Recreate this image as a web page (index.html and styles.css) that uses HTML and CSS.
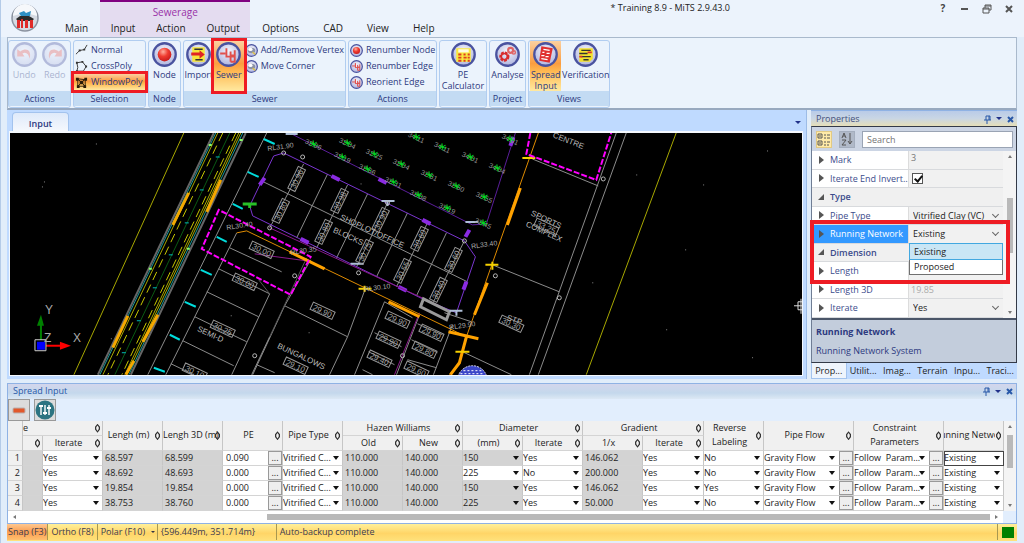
FILE: index.html
```html
<!DOCTYPE html>
<html lang="en">
<head>
    <meta charset="UTF-8">
    <title>Training 8.9 - MiTS 2.9.43.0</title>
    <link rel="stylesheet" href="styles.css">
</head>

<body>
    <!-- shared icon parts -->
    <svg class="defs" width="0" height="0">
        <defs>
            <radialGradient id="disc" cx="50%" cy="35%" r="70%">
                <stop offset="0" stop-color="#f4f5fc" />
                <stop offset="1" stop-color="#a9afdb" />
            </radialGradient>
            <radialGradient id="ball" cx="40%" cy="30%" r="70%">
                <stop offset="0" stop-color="#ffb0a0" />
                <stop offset="0.5" stop-color="#f03c30" />
                <stop offset="1" stop-color="#c81c1c" />
            </radialGradient>
            <symbol id="ring" viewBox="0 0 24 24">
                <circle cx="12" cy="12" r="10.8" fill="url(#disc)" stroke="#4a539f" stroke-width="2.2" />
            </symbol>
            <symbol id="node" viewBox="0 0 24 24">
                <use href="#ring" />
                <circle cx="12" cy="12" r="6.6" fill="url(#ball)" />
            </symbol>
            <symbol id="sewer" viewBox="0 0 24 24">
                <use href="#ring" />
                <path d="M4 11h5M10 6v8h8M14 9v10M18 8v11h-4M14 13h4M10 6v8" fill="none" stroke="#e0504c" stroke-width="1.8" />
            </symbol>
            <symbol id="lens" viewBox="0 0 24 24">
                <use href="#ring" />
                <ellipse cx="12" cy="12" rx="7" ry="5" fill="#8b93a8" />
                <ellipse cx="10" cy="10" rx="4" ry="3" fill="#fff" />
                <path d="M14 15l5 4" stroke="#d8c050" stroke-width="3" />
            </symbol>
        </defs>
    </svg>

    <header class="titlebar">
        <svg class="logo" viewBox="0 0 28 28">
            <circle cx="14" cy="14" r="13" fill="#d5dae2" stroke="#8b93a0" stroke-width="1.5" />
            <path d="M2 12a12 12 0 0 1 24 0q-12 -5 -24 0z" fill="#f6f8fb" />
            <path d="M8 9l5-2 2 2 5-2-1 5H10z" fill="#2e8fc4" />
            <path d="M5 15l4-3h9l5 3-2 2H7z" fill="#2a2a2a" />
            <path d="M6 16h3v8H6zM10 15h2v9h-2zM14 16h3v8h-3zM19 16h3v8h-3z" fill="#e02a28" />
        </svg>
        <nav class="tabs">
            <a href="#main">Main</a>
            <div class="context">
                <span class="context-title">Sewerage</span>
                <a href="#input">Input</a>
                <a href="#action">Action</a>
                <a href="#output">Output</a>
            </div>
            <a href="#options">Options</a>
            <a href="#cad">CAD</a>
            <a href="#view">View</a>
            <a href="#help">Help</a>
        </nav>
        <h1>* Training 8.9 - MiTS 2.9.43.0</h1>
        <div class="window-buttons">
            <button aria-label="Help"><b>?</b></button>
            <button aria-label="Minimize"><svg viewBox="0 0 10 10"><path d="M1 5h7" stroke-width="2" /></svg></button>
            <button aria-label="Restore"><svg viewBox="0 0 10 10"><path d="M1 4h6v5H1zM1 5h6M3 4V1h6v5H7M3 2h6" /></svg></button>
            <button aria-label="Close"><svg viewBox="0 0 10 10"><path d="M2 2l6 6M8 2l-6 6" stroke-width="2" /></svg></button>
        </div>
    </header>

    <div class="ribbon">
        <section class="group w-actions">
            <div class="tools">
                <button class="big off">
                    <svg viewBox="0 0 24 24"><use href="#ring" /><path d="M5 7v7h7l-2-3c3-2 6 0 7 5 2-8-3-11-9-7z" fill="#e8605c" /></svg>
                    <span>Undo</span>
                </button>
                <button class="big off">
                    <svg viewBox="0 0 24 24"><use href="#ring" /><path d="M19 7v7h-7l2-3c-3-2-6 0-7 5-2-8 3-11 9-7z" fill="#e8605c" /></svg>
                    <span>Redo</span>
                </button>
            </div>
            <h2>Actions</h2>
        </section>
        <section class="group w-selection">
            <div class="tools list">
                <button class="small"><svg viewBox="0 0 14 14"><path d="M1 11l4-4 5-1 3-5" fill="none" stroke="#333" /><path d="M4 6h2v2H4zM9 5h2v2H9z" fill="#333" /></svg>Normal</button>
                <button class="small"><svg viewBox="0 0 14 14"><path d="M2 3l6-1 4 5-3 5H2l1-4z" fill="none" stroke="#333" /><path d="M1 2h2v2H1zM7 1h2v2H7zM11 6h2v2h-2zM1 11h2v2H1z" fill="#333" /></svg>CrossPoly</button>
                <button class="small active marked"><svg viewBox="0 0 14 14"><path d="M3 3l8 1v7H3zM3 3l8 8M11 3l-8 8" fill="none" stroke="#2a1c08" /><path d="M1 2h3v3H1zM10 2h3v3h-3zM2 10h3v3H2zM9 10h3v3H9zM5 5h4v4H5z" fill="#2a1c08" /></svg>WindowPoly</button>
            </div>
            <h2>Selection</h2>
        </section>
        <section class="group w-node">
            <div class="tools">
                <button class="big"><svg><use href="#node" /></svg><span>Node</span></button>
            </div>
            <h2>Node</h2>
        </section>
        <section class="group w-sewer">
            <div class="tools">
                <button class="big">
                    <svg viewBox="0 0 24 24"><use href="#ring" /><path d="M6 5h12v14H6z" fill="#f6e63c" /><path d="M8 7h8M9 17h7" stroke="#333" stroke-width="1.4" /><path d="M5 10h8V8l5 4-5 4v-3H5z" fill="#e02424" /></svg>
                    <span>Import</span>
                </button>
                <button class="big active marked"><svg><use href="#sewer" /></svg><span>Sewer</span></button>
                <div class="list">
                    <button class="small"><svg><use href="#lens" /></svg>Add/Remove Vertex</button>
                    <button class="small"><svg><use href="#lens" /></svg>Move Corner</button>
                </div>
            </div>
            <h2>Sewer</h2>
        </section>
        <section class="group w-renumber">
            <div class="tools list">
                <button class="small"><svg><use href="#node" /></svg>Renumber Node</button>
                <button class="small"><svg><use href="#sewer" /></svg>Renumber Edge</button>
                <button class="small"><svg><use href="#sewer" /></svg>Reorient Edge</button>
            </div>
            <h2>Actions</h2>
        </section>
        <section class="group w-pe">
            <div class="tools">
                <button class="big">
                    <svg viewBox="0 0 24 24"><use href="#ring" /><path d="M5 6h14v13H5z" fill="#f8e840" /><path d="M7 7h10v3H7z" fill="#fffbe0" /><path d="M7 12h3M7 15h3M7 18h3M12 12h2M12 15h3M12 18h2M16 12h2M16 15h2M16 18h2" stroke="#e03c20" stroke-width="1.8" /></svg>
                    <span>PE<br>Calculator</span>
                </button>
            </div>
            <h2></h2>
        </section>
        <section class="group w-project">
            <div class="tools">
                <button class="big">
                    <svg viewBox="0 0 24 24"><use href="#ring" /><circle cx="9" cy="14" r="3.6" fill="none" stroke="#d82c2c" stroke-width="2.6" stroke-dasharray="2.4 1" /><circle cx="9" cy="14" r="3" fill="none" stroke="#d82c2c" stroke-width="1.6" /><circle cx="15" cy="8" r="2.4" fill="none" stroke="#e06464" stroke-width="2" /><circle cx="18" cy="10" r="1.6" fill="none" stroke="#e06464" stroke-width="1.4" /></svg>
                    <span>Analyse</span>
                </button>
            </div>
            <h2>Project</h2>
        </section>
        <section class="group w-views">
            <div class="tools">
                <button class="big active">
                    <svg viewBox="0 0 24 24"><use href="#ring" /><path d="M8 4l11 2-3 14-10-2z" fill="#e03030" /><path d="M10 7l6 1M9 10h2M13 11h3M8 13h3M12 14h3M8 16l6 1" stroke="#fff" stroke-width="1.2" /></svg>
                    <span>Spread<br>Input</span>
                </button>
                <button class="big">
                    <svg viewBox="0 0 24 24"><use href="#ring" /><path d="M6 6h13v10l-3 3H6z" fill="#f4e22c" /><path d="M8 8h9M6 11h8M8 14h9M10 17h5" stroke="#333" stroke-width="1.3" /><path d="M14 10h4M6 14h3" stroke="#d83030" stroke-width="1.6" /></svg>
                    <span>Verification</span>
                </button>
            </div>
            <h2>Views</h2>
        </section>
    </div>

    <main class="workspace">
        <section class="document">
            <div class="document-tabs">
                <a href="#input">Input</a>
                <button class="caret" aria-label="Documents"></button>
            </div>
            <svg class="drawing" id="drawing" viewBox="10 133 793 242" preserveAspectRatio="xMinYMin slice">
                <!-- boundaries and road -->
                <g fill="none" stroke="#a8a800">
                    <path d="M184 133L74 375M677 133L587 375" />
                    <path d="M218 133L103 375M239 133L125 375M241 133L127 375" />
                    <path d="M223 133L108 375M236 133L122 375" stroke-dasharray="9 5" stroke="#c8c800" />
                </g>
                <g fill="none">
                    <path d="M214 133L98 375M246 133L131 375" stroke="#666" stroke-width="2" />
                    <path d="M216 133L100 375M243 133L129 375" stroke="#1b9a9a" />
                    <path d="M230 133L115 375" stroke="#0a5a14" />
                    <path d="M189 193L173 225M128 316L113 348M221 180L207 212M158 315L143 342M134 361L126 375" stroke="#f5a800" stroke-width="3" />
                    <path d="M216 157h4M200 190h4M185 223h4M169 255h4M153 288h4M137 321h4M122 353h4" stroke="#00b8b8" />
                    <path d="M209 145h3M149 269h3M187 249h3M240 140h3" stroke="#8f6" stroke-width="2" />
                </g>

                <!-- lot lines -->
                <g fill="none" stroke="#8c8c8c">
                    <path d="M267 133L148 375M237 233L166 375M270 294L232 375M270 337L252 375M257 365L275 373" />
                    <path d="M230 248L282 272M219 269L270 294M207 292L259 317M195 317L247 342M183 341L234 366M171 364L194 375" />
                    <path d="M311 260L285 306L253 375M285 306L348 337M365 291L348 337L330 375M385 302L355 375" />
                    <path d="M307 258L270 337M259 280L270 294" stroke="#555" />
                    <path d="M304 164L270 228M328 174L297 238M348 185L317 248M368 194L337 258M388 203L357 267M408 213L377 277M428 223L397 287M447 233L417 296M465 241L434 302M264 182L468 282" />
                    <path d="M375 333L402 347M369 352L395 365M363 370L373 375M418 324L443 335M412 340L438 353M408 360L437 368M420 315L397 375M453 325L434 375M413 318L385 302" />
                    <path d="M533 159L599 186M493 265L560 292M463 352L512 375M617 133L530 375M627 133L539 375M445 313L472 322" />
                </g>
                <g stroke="#00dcdc" stroke-width="2">
                    <path d="M264 139l11 5M248 172l11 5M233 204l10 5M217 237l10 5M201 270l11 5M185 302l11 5M170 335l10 5M154 368l11 4" />
                </g>

                <!-- drains -->
                <g fill="none" stroke="#7a35d0">
                    <path d="M284 153L465 241L476 257L457 313L423 299L253 216L250 206L274 156z" />
                    <path d="M292 134L473 225L487 224L516 133" stroke="#5a1e9a" />
                    <path d="M260 185l5-7M332 176l8 4M379 179l8 4M423 220l8 4M470 230l-4 7M467 282l-3 8M399 287l8 4M301 239l8 4M514 137l-3 9" stroke="#8a2be2" stroke-width="4" />
                </g>
                <path d="M270 228L440 306M420 313L395 375M255 254L307 261" fill="none" stroke="#8a1a8a" />

                <!-- running network -->
                <g fill="none" stroke="#e08c00">
                    <path d="M237 233L247 231L467 337M539 133L467 337L460 365L450 375" />
                    <path d="M290 252L325 269M389 302L420 317M449 332L479 339M521 188L508 225M488 283L475 315M467 337L460 363L451 375" stroke="#ffa200" stroke-width="3" />
                    <path d="M486 265h13M456 352h14M359 289h13M523 158h13M493 262v8M365 286v6" stroke="#f5d000" stroke-width="2" />
                </g>
                <g fill="none" stroke="#ff00ff" stroke-width="2" stroke-dasharray="6 2">
                    <path d="M219 210L202 249L291 295L311 257z" />
                    <path d="M531 133L527 154L597 180L612 133" />
                </g>
                <path d="M424 299L450 312L447 320L421 307z" fill="none" stroke="#9a9a9a" stroke-width="3" />
                <g fill="none" stroke="#aebfd8" stroke-width="2">
                    <path d="M382 201h13M351 264h13M466 222h13M450 311h13M286 134h12M388 201v5M457 311v5" />
                    <path d="M243 204h14M250 204v4" stroke="#28c028" stroke-width="3" />
                </g>
                <g fill="none" stroke="#b8b8b8">
                    <circle cx="303" cy="157" r="2" /><circle cx="295" cy="276" r="2" /><circle cx="255" cy="356" r="2" />
                    <circle cx="359" cy="273" r="2" /><circle cx="496" cy="276" r="2" /><circle cx="403" cy="356" r="2" />
                    <circle cx="604" cy="179" r="2" /><circle cx="560" cy="298" r="2" /><circle cx="270" cy="228" r="2" />
                    <circle cx="284" cy="153" r="2" /><circle cx="465" cy="241" r="2" /><circle cx="388" cy="203" r="2" />
                </g>
                <circle cx="473" cy="381" r="15" fill="#3a46c8" stroke="#dde" stroke-dasharray="2 1" />
                <path d="M464 371h18M461 374h24" stroke="#fff" stroke-dasharray="2 2" />

                <g class="place">
                    <text transform="translate(340 219) rotate(25)">SHOPLOT/OFFICE</text>
                    <text transform="translate(333 232) rotate(25)">BLOCKS</text>
                    <text transform="translate(277 348) rotate(25)">BUNGALOWS</text>
                    <text transform="translate(197 331) rotate(25)">SEMI-D</text>
                    <text transform="translate(531 215) rotate(25)">SPORTS</text>
                    <text transform="translate(526 226) rotate(25)">COMPLEX</text>
                    <text transform="translate(553 137) rotate(22)">CENTRE</text>
                    <text transform="translate(507 320) rotate(20)">STP</text>
                </g>
                <g class="level">
                    <text transform="translate(268 151) rotate(-8)">RL31.90</text>
                    <text transform="translate(227 230) rotate(-8)">RL30.40</text>
                    <text transform="translate(291 255) rotate(-8)">RL30.35</text>
                    <text transform="translate(365 292) rotate(-8)">RL30.10</text>
                    <text transform="translate(472 249) rotate(-8)">RL33.40</text>
                    <text transform="translate(450 330) rotate(-8)">RL29.90</text>
                </g>

                <!-- specks -->
                <path d="M96 144h1M44 182h1M42 187h1M111 339h1M637 175h1M704 185h1M768 151h1M686 250h1M593 283h1M667 330h1M753 358h1M231 316h1M309 333h1M361 184h1" stroke="#888" />

                <!-- axes -->
                <path d="M41 341V323" stroke="#008000" stroke-width="2" />
                <path d="M37 326l4-11 3 11z" fill="#008000" />
                <path d="M46 346h16" stroke="#f00" stroke-width="2" />
                <path d="M60 342l11 4-11 4z" fill="#f00" />
                <path d="M35 340h11v11H35z" fill="#000" stroke="#ccc" />
                <path d="M37 342h8v8h-8z" fill="#00f" />
                <g class="axis">
                    <text x="45" y="314">Y</text>
                    <text x="44" y="342">Z</text>
                    <text x="73" y="342">X</text>
                </g>
                <path d="M795 306h8M802 299v15M799 302h6v8h-6z" fill="none" stroke="#ddd" />
            </svg>
        </section>

        <aside class="properties">
            <div class="panel-title warm">
                <h2>Properties</h2>
                <button aria-label="Pin"><svg viewBox="0 0 9 9"><path d="M3 1h4M3 1v4M6 1v4M7 1v4M1 5h7M4 5v4" /></svg></button>
                <button class="caret" aria-label="Menu"></button>
                <button aria-label="Close"><svg viewBox="0 0 9 9"><path d="M2 2l5 5M7 2L2 7" stroke-width="2" /></svg></button>
            </div>
            <div class="props-body">
                <div class="props-bar">
                    <button class="on" aria-label="Categorized"><svg viewBox="0 0 14 14"><path d="M1 2h4v4H1zM1 9h4v4H1zM2 4h2M2 11h2M7 3h2M10 3h3M7 6h2M10 6h3M7 10h2M10 10h3M7 13h2M10 13h2" /></svg></button>
                    <button aria-label="Sort"><svg viewBox="0 0 14 14"><path d="M2 6l2-5 2 5M3 4h2M2 8h4l-4 5h4M10 1v11M8 9l2 3 2-3" /></svg></button>
                    <input type="search" placeholder="Search" aria-label="Search">
                </div>
                <div class="props-list">
                    <div class="rows">
                        <div class="row"><i></i><span>Mark</span><output>3</output></div>
                        <div class="row"><i></i><label for="invert">Iterate End Invert...</label><div><input type="checkbox" id="invert" checked></div></div>
                        <div class="row head"><i></i><span>Type</span></div>
                        <div class="row"><i></i><label for="pipe">Pipe Type</label><div class="pick"><select id="pipe"><option>Vitrified Clay (VC)</option></select></div></div>
                        <div class="row selected"><i></i><label for="network">Running Network</label>
                            <div class="pick"><select id="network"><option>Existing</option><option>Proposed</option></select>
                                <ul class="menu">
                                    <li class="hover">Existing</li>
                                    <li>Proposed</li>
                                </ul>
                            </div>
                        </div>
                        <div class="row head"><i></i><span>Dimension</span></div>
                        <div class="row"><i></i><span>Length</span><output></output></div>
                        <div class="row"><i></i><span>Length 3D</span><output class="dim">19.85</output></div>
                        <div class="row"><i></i><label for="iterate">Iterate</label><div class="pick"><select id="iterate"><option>Yes</option></select></div></div>
                    </div>
                    <div class="vscroll"><span class="up"></span><span class="thumb"></span><span class="down"></span></div>
                    <div class="callout"></div>
                </div>
                <div class="props-help">
                    <h3>Running Network</h3>
                    <p>Running Network System</p>
                </div>
            </div>
            <nav class="panel-tabs">
                <a class="on" href="#prop">Prop...</a>
                <a href="#utilities">Utilit...</a>
                <a href="#images">Imag...</a>
                <a href="#terrain">Terrain</a>
                <a href="#inputs">Inpu...</a>
                <a href="#tracing">Traci...</a>
            </nav>
        </aside>
    </main>

    <section class="spread">
        <div class="panel-title">
            <h2>Spread Input</h2>
            <button aria-label="Pin"><svg viewBox="0 0 9 9"><path d="M3 1h4M3 1v4M6 1v4M7 1v4M1 5h7M4 5v4" /></svg></button>
            <button class="caret" aria-label="Menu"></button>
            <button aria-label="Close"><svg viewBox="0 0 9 9"><path d="M2 2l5 5M7 2L2 7" stroke-width="2" /></svg></button>
        </div>
        <div class="spread-bar">
            <button aria-label="Remove"><svg viewBox="0 0 20 20"><rect x="4" y="8" width="12" height="5" rx="1" fill="#e2582a" stroke="#b8b0b0" /></svg></button>
            <button aria-label="Settings"><svg viewBox="0 0 20 20"><circle cx="10" cy="10" r="9.5" fill="#2c7482" /><path d="M6 5v10M10 5v10M14 5v10" stroke="#fff" stroke-width="1.4" /><path d="M4 6h4M8 13h4M12 8h4" stroke="#fff" stroke-width="2" /></svg></button>
        </div>
        <div class="sheet">
            <table>
                <colgroup>
                    <col style="width:15px"><col style="width:20px"><col style="width:60px"><col style="width:60px"><col style="width:60px"><col style="width:60px"><col style="width:60px"><col style="width:60px"><col style="width:60px"><col style="width:60px"><col style="width:60px"><col style="width:60px"><col style="width:61px"><col style="width:60px"><col style="width:90px"><col style="width:90px"><col style="width:60px">
                </colgroup>
                <thead>
                    <tr>
                        <th rowspan="2" class="plain"></th>
                        <th colspan="2" class="cut">e</th>
                        <th rowspan="2">Lengh (m)</th>
                        <th rowspan="2" class="tight">Lengh 3D (m)</th>
                        <th rowspan="2">PE</th>
                        <th rowspan="2">Pipe Type</th>
                        <th colspan="2">Hazen Williams</th>
                        <th colspan="2">Diameter</th>
                        <th colspan="2">Gradient</th>
                        <th rowspan="2">Reverse<br>Labeling</th>
                        <th rowspan="2">Pipe Flow</th>
                        <th rowspan="2">Constraint<br>Parameters</th>
                        <th rowspan="2"><span class="clip">unning Netwo</span></th>
                    </tr>
                    <tr>
                        <th></th>
                        <th>Iterate</th>
                        <th>Old</th>
                        <th>New</th>
                        <th>(mm)</th>
                        <th>Iterate</th>
                        <th>1/x</th>
                        <th>Iterate</th>
                    </tr>
                </thead>
                <tbody id="edges"></tbody>
            </table>
            <div class="vscroll"><span class="up"></span><span class="thumb"></span><span class="down"></span></div>
        </div>
        <div class="hscroll"><span class="left"></span><span class="thumb"></span><span class="right"></span></div>
    </section>

    <footer class="status">
        <button class="on">Snap (F3)</button>
        <button>Ortho (F8)</button>
        <button class="polar">Polar (F10)</button>
        <span class="coords">{596.449m, 351.714m}</span>
        <span class="message">Auto-backup complete</span>
        <span class="light"></span>
    </footer>

    <script>
        const drawing = document.querySelector("#drawing");
        const edges = document.querySelector("#edges");

        // iterate, length, length 3d, pe, diameter, iterate, 1/x, iterate, reverse
        const rows = [
            ["Yes", "68.597", "68.599", "0.090", "150", "Yes", "146.062", "Yes", "No"],
            ["Yes", "48.692", "48.693", "0.000", "225", "No", "200.000", "Yes", "No"],
            ["Yes", "19.854", "19.854", "0.000", "150", "Yes", "146.062", "Yes", "Yes"],
            ["Yes", "38.753", "38.760", "0.000", "225", "Yes", "50.000", "Yes", "No"]
        ];

        const pick = (name, value, extra = "") =>
            `<td class="pick ${extra}"><select aria-label="${name}"><option>${value}</option></select></td>`;
        const pickMore = (name, value) =>
            `<td class="pick more"><select aria-label="${name}"><option>${value}</option></select><button>...</button></td>`;

        rows.forEach((r, i) => {
            edges.insertAdjacentHTML("beforeend", `<tr>
                <th class="plain">${i + 1}</th><td class="locked"></td>
                ${pick("Iterate", r[0])}
                <td class="locked">${r[1]}</td><td class="locked">${r[2]}</td>
                <td class="more"><input type="text" aria-label="PE" value="${r[3]}"><button>...</button></td>
                ${pick("Pipe Type", "Vitrified C...")}
                <td class="locked">110.000</td><td class="locked">140.000</td>
                ${pick("Diameter", r[4], i == 1 ? "" : "locked")}
                ${pick("Diameter iterate", r[5])}
                <td class="locked">${r[6]}</td>
                ${pick("Gradient iterate", r[7])}
                ${pick("Reverse Labeling", r[8])}
                ${pickMore("Pipe Flow", "Gravity Flow")}
                ${pickMore("Constraint", "Follow&nbsp; Param...")}
                ${pick("Running Network", "Existing", i == 0 ? "focus" : "")}
            </tr>`);
        });

        // boxed platform levels: x, y, angle, text
        const boxes = [
            [297, 179, -64, "30.96"], [281, 211, -64, "30.80"], [340, 201, -64, "30.98"], [324, 232, -64, "30.80"],
            [381, 220, -64, "30.90"], [365, 252, -64, "30.75"], [420, 239, -64, "30.60"], [403, 271, -64, "30.55"],
            [454, 260, -64, "30.60"], [439, 290, -64, "30.40"], [262, 250, 25, "30.00"], [245, 282, 25, "30.00"],
            [223, 329, 25, "30.25"], [195, 372, 25, "30.10"], [323, 311, 25, "29.90"], [296, 366, 25, "29.10"],
            [398, 320, 25, "29.90"], [389, 340, 25, "29.90"], [380, 359, 25, "29.40"], [432, 333, 25, "29.90"],
            [425, 350, 25, "29.80"], [417, 370, 25, "29.60"], [547, 227, 25, "33.25"], [512, 324, 25, "30.30"]
        ];
        boxes.forEach(([x, y, a, t]) => {
            drawing.insertAdjacentHTML("beforeend", `<g class="box" transform="translate(${x} ${y}) rotate(${a})">
                <rect x="-12" y="-4" width="24" height="8" /><text y="3">${t}</text></g>`);
        });

        // spot levels: x, y, text
        const spots = [
            [314, 144, "32.06"], [348, 143, "32.04"], [343, 157, "32.19"], [375, 154, "32.25"],
            [368, 169, "32.66"], [402, 164, "32.04"], [394, 182, "32.31"], [430, 175, "32.61"], [419, 195, "32.08"],
            [457, 186, "32.60"], [448, 208, "32.19"], [485, 197, "32.55"], [484, 223, "32.45"], [417, 137, "34.11"],
            [443, 147, "34.11"], [471, 157, "34.01"], [498, 168, "34.04"], [511, 139, "34.01"]
        ];
        spots.forEach(([x, y, t]) => {
            drawing.insertAdjacentHTML("beforeend", `<g class="spot" transform="translate(${x} ${y}) rotate(25)">
                <text y="3">${t}</text><path d="M-4 0h8M-2 -3l4 6M2 -3l-4 6" /></g>`);
        });
    </script>
</body>
</html>
```
FILE: styles.css
```css
* {
    box-sizing: border-box;
}

body {
    display: flex;
    flex-direction: column;
    min-height: 100vh;
    margin: 0;
    padding: 0 7px 3px 6px;
    background: #e1edfa;
    border-left: 1px solid #b4cbe8;
    font-family: "Open Sans", "Noto Sans", sans-serif;
    font-size: 9px;
    line-height: 12px;
    color: #222;
}

h1, h2, h3, p, ul {
    margin: 0;
    padding: 0;
    font-size: inherit;
    font-weight: normal;
}

button, input, select {
    margin: 0;
    padding: 0;
    border: none;
    background: none;
    font: inherit;
    color: inherit;
}

a {
    color: inherit;
    text-decoration: none;
}

.defs {
    position: absolute;
}

/* title bar */
.titlebar {
    display: flex;
    height: 37px;
    margin: 0 -7px 0 -6px;
    padding: 0 10px 0 10px;
    background: #ecf3fc;
}

.logo {
    width: 28px;
    height: 28px;
    margin: 4px 14px 0 0;
}

.tabs {
    display: flex;
    align-items: flex-end;
    font-size: 10px;
}

.tabs a {
    padding: 0 12px;
    line-height: 17px;
}

.context {
    display: flex;
    flex-wrap: wrap;
    align-content: space-between;
    width: 150px;
    height: 37px;
    border-top: 2px solid #800080;
    background: #e4dcf0;
}

.context a {
    flex: auto;
    padding: 0;
    text-align: center;
}

.context-title {
    width: 100%;
    padding-top: 4px;
    text-align: center;
    color: #9932a8;
}

.titlebar h1 {
    flex: 1;
    padding: 2px 44px 0 0;
    text-align: center;
}

.window-buttons {
    display: flex;
    gap: 12px;
    height: 16px;
}

.window-buttons button {
    width: 10px;
    font-size: 10px;
    color: #444;
}

.window-buttons svg {
    width: 10px;
    height: 10px;
    margin-top: 3px;
    fill: none;
    stroke: #555;
}

/* ribbon */
.ribbon {
    display: flex;
    gap: 2px;
    height: 73px;
    padding: 2px 0 0 0;
    border: 1px solid #a9b9cc;
    border-bottom: 2px solid #98a9bf;
    background: #ebf3fc;
    color: #2d3a80;
}

.group {
    display: flex;
    flex-direction: column;
    height: 68px;
    border: 1px solid #b1cdf0;
    border-radius: 3px;
}

.group h2 {
    height: 15px;
    margin-bottom: 1px;
    background: #c3dbf3;
    line-height: 15px;
    text-align: center;
}

.w-actions { width: 63px; }
.w-selection { width: 73px; }
.w-node { width: 33px; }
.w-sewer { width: 163px; }
.w-renumber { width: 89px; }
.w-pe { width: 48px; }
.w-project { width: 37px; }
.w-views { width: 82px; }

.tools {
    display: flex;
    flex: 1;
    justify-content: space-around;
}

.list {
    display: flex;
    flex-direction: column;
    justify-content: flex-start;
    align-items: flex-start;
    padding-top: 1px;
}

.big {
    display: flex;
    flex-direction: column;
    align-items: center;
    width: 31px;
    padding-top: 1px;
    line-height: 11px;
    white-space: nowrap;
}

.big svg {
    width: 25px;
    height: 25px;
    margin-bottom: 2px;
}

.small {
    display: flex;
    align-items: center;
    gap: 3px;
    height: 16px;
    padding: 0 1px;
    white-space: nowrap;
}

.small svg {
    flex: none;
    width: 13px;
    height: 13px;
}

.list .active {
    align-self: stretch;
}

.off {
    opacity: 0.35;
}

.active {
    background: linear-gradient(#fbd0a0, #fb9d40 45%, #ffb850 60%, #ffe9a0);
}

.marked {
    position: relative;
    z-index: 1;
    outline: 3px solid #ee1c24;
}

.w-views .big:last-child {
    width: 44px;
}

/* workspace */
.workspace {
    display: flex;
    flex: 1;
    gap: 4px;
    min-height: 260px;
}

.document {
    display: flex;
    flex: 1;
    flex-direction: column;
    min-width: 0;
    padding: 0 3px 3px 2px;
    border-right: 1px solid #9dbce6;
    background: #bfdaff;
}

.document-tabs {
    display: flex;
    justify-content: space-between;
    align-items: flex-end;
    height: 22px;
    border-bottom: 1px solid #f4f8fd;
}

.document-tabs a {
    width: 57px;
    height: 19px;
    margin-left: 3px;
    border: 1px solid #a3c3ee;
    border-bottom: none;
    border-radius: 4px 4px 0 0;
    background: linear-gradient(#dfeafa, #f5f8fd);
    text-align: center;
    line-height: 21px;
    font-weight: 600;
    color: #2d3a80;
}

.caret {
    width: 0;
    height: 0;
    border: 3px solid transparent;
    border-top-color: #22328a;
    border-bottom: none;
}

.document-tabs .caret {
    margin: 0 2px 7px 0;
}

.drawing {
    flex: 1;
    width: 100%;
    height: 0;
    border: 1px solid #f4f8fd;
    background: #000;
    font-family: "Liberation Sans", Arial, sans-serif;
}

.place text {
    font-size: 8px;
    fill: #bdbdbd;
}

.level text {
    font-size: 7px;
    fill: #a8a8a8;
}

.axis text {
    font-size: 12px;
    fill: #aaa;
}

.box rect {
    fill: none;
    stroke: #999;
}

.box text {
    font-size: 8px;
    text-anchor: middle;
    fill: #aaa;
}

.spot text {
    font-size: 7px;
    text-anchor: middle;
    fill: #9a9a9a;
}

.spot path {
    stroke: #00d820;
}

/* properties */
.properties {
    display: flex;
    flex-direction: column;
    width: 206px;
    background: #bfdaff;
}

.panel-title {
    display: flex;
    align-items: center;
    gap: 4px;
    height: 16px;
    padding: 0 2px 0 5px;
    border-top: 1px solid #8fb2e4;
    background: linear-gradient(#d3d6ec, #c4d8ec 60%, #dce8f4);
    color: #2858a8;
}

.panel-title.warm {
    background: linear-gradient(#b9cbe8, #c9d6e4 50%, #e6dfb8);
    color: #44507c;
}

.panel-title h2 {
    flex: 1;
}

.panel-title button:not(.caret) {
    width: 9px;
    height: 12px;
}

.panel-title svg {
    display: block;
    width: 9px;
    height: 9px;
    margin-top: 1px;
    fill: none;
    stroke: #2858a8;
}

.props-body {
    display: flex;
    flex: 1;
    flex-direction: column;
    border: 1px solid #333a48;
    border-left-color: #6f7d94;
}

.props-bar {
    display: flex;
    align-items: center;
    gap: 7px;
    height: 24px;
    padding: 0 3px 0 4px;
    background: #ccd5e4;
}

.props-bar button {
    width: 16px;
    height: 17px;
    background: #b0b9c8;
    border: 1px solid #a4aebe;
}

.props-bar .on {
    background: #ffeaa8;
    border-color: #e2ca84;
}

.props-bar svg {
    display: block;
    width: 14px;
    height: 14px;
    fill: none;
    stroke: #555;
}

.props-bar input {
    flex: 1;
    min-width: 0;
    height: 17px;
    padding: 0 4px;
    border: 1px solid #9aa4b4;
    background: #fff;
}

.props-list {
    position: relative;
    display: flex;
    flex: 1;
    border-bottom: 2px solid #4a5568;
    background: #f0f0f0;
}

.rows {
    display: grid;
    flex: 1;
    grid-auto-rows: 1fr;
}

.row {
    display: grid;
    grid-template-columns: 18px 78px 1fr;
    align-items: stretch;
    border-bottom: 1px solid #d8dadd;
    background: #fff;
    color: #3c4c8c;
    line-height: 17px;
    white-space: nowrap;
}

.row > :last-child:not(:nth-child(2)) {
    border-left: 1px solid #dcdcdc;
    background: #f1f1f1;
    color: #222;
}

.row i {
    align-self: center;
    width: 0;
    height: 0;
    margin-left: 7px;
    border: 4px solid transparent;
    border-left: 5px solid #555;
    border-right: none;
}

.row.head {
    background: #f0f0f0;
    font-weight: 600;
}

.row.head i {
    margin-left: 6px;
    border: none;
    border-left: 6px solid transparent;
    border-bottom: 6px solid #555;
}

.row.selected {
    background: #3399ff;
    color: #fff;
}

.row output {
    padding-left: 2px;
    line-height: 14px;
}

.row > output:last-child:not(:nth-child(2)) {
    color: #777;
}

.row > output.dim:last-child:not(:nth-child(2)) {
    line-height: 17px;
    color: #aaa;
}

.row input {
    display: block;
    width: 11px;
    height: 11px;
    margin: 3px 0 0 3px;
    appearance: none;
    border: 1px solid #555;
    background: #fff;
}

.row input:checked::after {
    content: "";
    display: block;
    width: 3px;
    height: 6px;
    margin-left: 3px;
    border: solid #111;
    border-width: 0 2px 2px 0;
    transform: rotate(40deg);
}

.pick {
    position: relative;
}

.pick select {
    display: block;
    width: 100%;
    appearance: none;
    outline: none;
}

.row .pick select {
    height: 17px;
    padding-left: 4px;
}

.row .pick::after {
    content: "";
    position: absolute;
    top: 5px;
    right: 5px;
    width: 4px;
    height: 4px;
    border: solid #666;
    border-width: 0 1px 1px 0;
    transform: rotate(45deg);
    pointer-events: none;
}

.menu {
    position: absolute;
    z-index: 1;
    top: 18px;
    left: 0;
    right: 0;
    border: 1px solid #707070;
    background: #fff;
    list-style: none;
    line-height: 15px;
    color: #222;
}

.menu li {
    height: 15px;
    padding-left: 4px;
}

.menu .hover {
    background: #c9e6f5;
    outline: 1px solid #42a8e0;
}

.callout {
    position: absolute;
    z-index: 2;
    top: 69px;
    left: -2px;
    width: 200px;
    height: 64px;
    border: 4px solid #ee1c24;
    pointer-events: none;
}

.vscroll {
    display: flex;
    flex-direction: column;
    align-items: center;
    width: 13px;
    padding: 4px 0;
    background: #f4f4f4;
}

.vscroll .thumb {
    flex: none;
    width: 6px;
    height: 55px;
    margin: 40px 0 auto;
    background: #b9b9b9;
}

.up, .down, .left, .right {
    border: 2px solid transparent;
}

.up {
    border-bottom: 3px solid #777;
    border-top: none;
}

.down {
    border-top: 3px solid #777;
    border-bottom: none;
}

.left {
    border-right: 3px solid #777;
    border-left: none;
}

.right {
    border-left: 3px solid #777;
    border-right: none;
}

.props-help {
    height: 42px;
    padding: 6px 4px 0;
    background: #c3cddc;
    color: #2d3a80;
}

.props-help h3 {
    margin-bottom: 7px;
    font-weight: 700;
}

.panel-tabs {
    display: flex;
    height: 16px;
    line-height: 15px;
}

.panel-tabs a {
    flex: 1 0 auto;
    text-align: center;
}

.panel-tabs .on {
    background: #eef4fc;
    border: 1px solid #a3c3ee;
    border-top: none;
}

/* spread input */
.spread {
    margin-top: 4px;
    border: 1px solid #8fb2e4;
    border-top: none;
    background: #e2eefd;
}

.spread-bar {
    display: flex;
    gap: 4px;
    height: 22px;
}

.spread-bar button {
    width: 22px;
    height: 22px;
    border: 1px solid #999;
    background: #dcdcdc;
}

.spread-bar svg {
    display: block;
    width: 20px;
    height: 20px;
}

.sheet {
    display: flex;
    height: 90px;
    overflow: hidden;
}

.sheet table {
    flex: 1;
    width: 100%;
    table-layout: fixed;
    border-spacing: 0;
}

.sheet th,
.sheet td {
    height: 15px;
    padding: 0;
    border-right: 1px solid #c6c6c6;
    border-bottom: 1px solid #d4d4d4;
    background: #fff;
    line-height: 14px;
    white-space: nowrap;
    overflow: hidden;
}

.sheet th {
    position: relative;
    padding-right: 8px;
    background: #f0f0f0;
    font-weight: normal;
}

.sheet thead th:not(.plain)::after {
    content: "";
    position: absolute;
    top: calc(50% - 4px);
    right: 2px;
    width: 5px;
    height: 9px;
    background: #333;
    clip-path: polygon(50% 0, 100% 35%, 100% 65%, 50% 100%, 0 65%, 0 35%, 50% 0, 50% 20%, 25% 40%, 25% 60%, 50% 80%, 75% 60%, 75% 40%, 50% 20%);
}

.sheet .plain {
    padding: 0 2px 0 0;
    text-align: right;
}

.sheet .cut {
    text-align: left;
}

.sheet .tight {
    padding-right: 4px;
}

.clip {
    display: flex;
    justify-content: center;
    overflow: hidden;
}

.sheet .locked {
    padding-left: 2px;
    background: #d3d3d3;
}

.sheet .pick.locked {
    padding-left: 0;
}

.sheet select {
    height: 14px;
    padding-right: 10px;
}

.sheet .pick::after {
    content: "";
    position: absolute;
    top: 5px;
    right: 3px;
    border: 3px solid transparent;
    border-top: 4px solid #111;
    border-bottom: none;
    pointer-events: none;
}

.sheet .focus {
    outline: 1px solid #444;
    outline-offset: -1px;
}

.more input {
    display: block;
    width: calc(100% - 15px);
    height: 14px;
    padding: 1px 0 0 3px;
}

.sheet .more {
    position: relative;
}

.more button {
    position: absolute;
    top: 0;
    right: 0;
    width: 14px;
    height: 14px;
    border: 1px solid #999;
    background: #eee;
    line-height: 11px;
}

.sheet .pick.more::after {
    right: 18px;
}

.sheet .vscroll .thumb {
    height: 33px;
    margin-top: 7px;
}

.hscroll {
    display: flex;
    align-items: center;
    gap: 5px;
    height: 12px;
    margin-right: 13px;
    padding: 0 5px;
    background: #fff;
}

.hscroll .thumb {
    flex: 1;
    height: 6px;
    margin-left: 25%;
    background: #b9b9b9;
}

/* status bar */
.status {
    display: flex;
    align-items: center;
    height: 17px;
    background: linear-gradient(#fff09a, #ffd567 55%, #ffe27c);
    color: #3c3c50;
}

.status > * {
    height: 16px;
    border-right: 1px solid #a89850;
    line-height: 16px;
    white-space: nowrap;
}

.status button {
    padding: 0 3px;
}

.status .on {
    padding: 0 1px;
    background: linear-gradient(#ffc890, #fb9d50 50%, #ffc070);
}

.status .polar {
    position: relative;
    width: 60px;
    text-align: left;
}

.status .polar::after {
    content: "";
    position: absolute;
    top: 7px;
    right: 2px;
    border: 2px solid transparent;
    border-top-color: #334;
    border-bottom: none;
}

.coords {
    width: 119px;
    padding-left: 3px;
}

.status .message {
    flex: 1;
    padding-left: 3px;
}

.status .light {
    width: 12px;
    height: 11px;
    margin: 0 3px 0 4px;
    border: none;
    background: #008000;
}
```
